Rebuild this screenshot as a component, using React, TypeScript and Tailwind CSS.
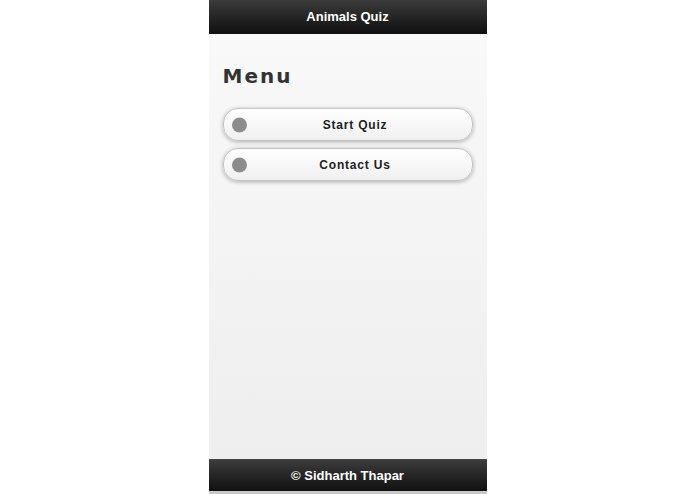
import React from 'react';

const items = ['Start Quiz', 'Contact Us'];

const MenuButton: React.FC<{ label: string }> = ({ label }) => (
    <button
        type="button"
        className="relative flex h-[33px] w-full items-center justify-center rounded-[15px] border border-[#c4c4c4] bg-gradient-to-b from-[#ffffff] to-[#f0f0f0] pl-[30px] pr-[15px] text-[12px] font-bold tracking-[0.8px] text-[#222] shadow-[0_1px_4px_rgba(0,0,0,0.3)]"
    >
        <span className="absolute left-[8px] top-1/2 h-[15px] w-[15px] -translate-y-1/2 rounded-full bg-[#8c8c8c]"></span>
        {label}
    </button>
);

const App: React.FC = () => {
    return (
        <div className="min-h-screen bg-white font-['Liberation_Sans',Arial,sans-serif]">
            <div className="mx-auto flex h-[494px] w-[278px] flex-col">
                <header className="flex h-[34px] shrink-0 items-center justify-center border-b border-[#111] bg-gradient-to-b from-[#3c3c3c] to-[#111111] text-[13px] font-bold text-white">
                    Animals Quiz
                </header>

                <main className="flex-1 bg-gradient-to-b from-[#f9f9f9] to-[#eeeeee] px-[14px] pt-[30px]">
                    <h1 className="font-['DejaVu_Sans',Verdana,sans-serif] text-[20px] leading-[24px] font-bold tracking-[2px] text-[#333]">Menu</h1>
                    <div className="mt-[20px] flex flex-col gap-[7px]">
                        {items.map((item) => (
                            <MenuButton key={item} label={item} />
                        ))}
                    </div>
                </main>

                <footer className="flex h-[32px] shrink-0 items-center justify-center border-t border-[#444] bg-gradient-to-b from-[#3c3c3c] to-[#111111] text-[13px] font-bold text-white">
                    © Sidharth Thapar
                </footer>
                <div className="h-[3px] shrink-0 bg-[#c8c8c8]"></div>
            </div>
        </div>
    );
};

export default App;
